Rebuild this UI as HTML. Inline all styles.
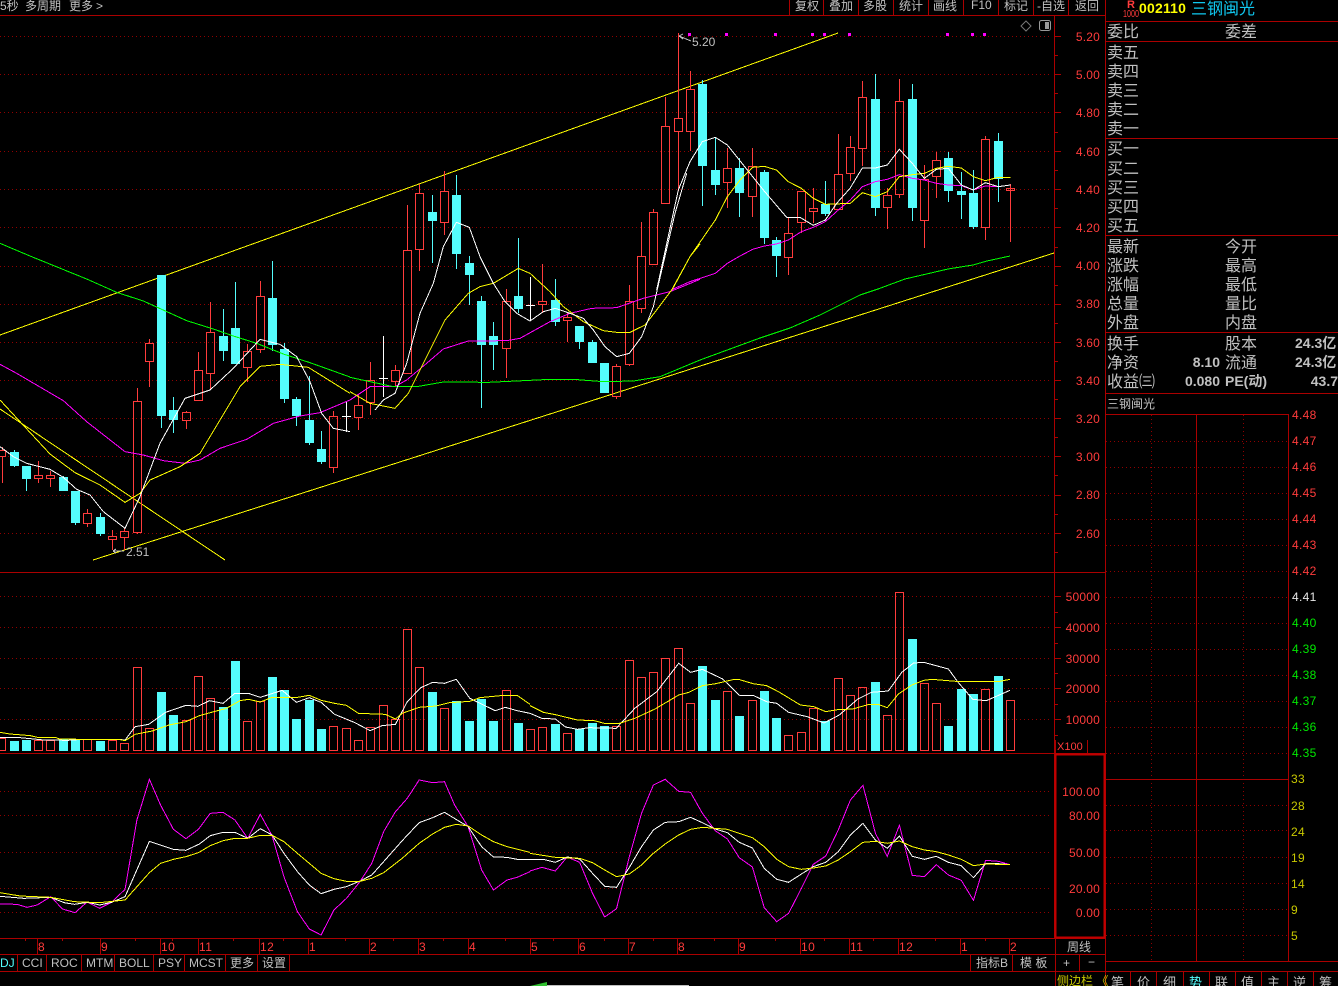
<!DOCTYPE html>
<html><head><meta charset="utf-8"><title>三钢闽光 002110</title>
<style>
html,body{margin:0;padding:0;background:#000;width:1338px;height:986px;overflow:hidden}
svg{display:block}
text{font-family:"Liberation Sans","WenQuanYi Zen Hei","Noto Sans CJK SC",sans-serif}
.g{fill:#c0c0c0}
.r{fill:#ff3c3c}
.y{fill:#c8c800}
.gn{fill:#00e600}
.c{font-size:16px;fill:#c0c0c0}
.a{font-size:12px;fill:#ff3c3c;text-anchor:end;letter-spacing:.2px}
.t{font-size:12px;fill:#ff3c3c;letter-spacing:.5px}
.b{font-size:12px;fill:#c0c0c0}
.v{font-size:14px;font-weight:bold;fill:#c0c0c0}
.l{fill:none;stroke-width:1;shape-rendering:crispEdges;vector-effect:non-scaling-stroke}
.d{fill:none;stroke:#900000;stroke-dasharray:1 3;shape-rendering:crispEdges}
.s{fill:none;stroke:#aa0000;shape-rendering:crispEdges}
</style></head><body>
<svg width="1338" height="986" viewBox="0 0 1338 986" xmlns="http://www.w3.org/2000/svg">

<!-- dotted grids -->
<path class="d" d="M0 36.5H1052M0 74.5H1052M0 112.5H1052M0 151.5H1052M0 189.5H1052M0 227.5H1052M0 266.5H1052M0 304.5H1052M0 342.5H1052M0 380.5H1052M0 418.5H1052M0 456.5H1052M0 495.5H1052M0 533.5H1052"/>
<path class="d" d="M0 596.5H1052M0 627.5H1052M0 658.5H1052M0 688.5H1052M0 719.5H1052"/>
<path class="d" d="M0 791.5H1052M0 815.5H1052M0 852.5H1052M0 888.5H1052M0 912.5H1052"/>
<path class="d" d="M1106 441.5H1288M1106 467.5H1288M1106 493.5H1288M1106 519.5H1288M1106 545.5H1288M1106 571.5H1288M1106 597.5H1288M1106 623.5H1288M1106 649.5H1288M1106 675.5H1288M1106 701.5H1288M1106 727.5H1288M1106 753.5H1288M1106 805.5H1288M1106 830.5H1288M1106 857.5H1288M1106 883.5H1288M1106 909.5H1288M1106 935.5H1288M1151.5 415V961M1243.5 415V961"/>

<!-- trend lines -->
<path class="l" stroke="#ffff00" d="M0 335L838 33M93 560L1054 253M0 409L225 560"/>

<!-- candle wicks: red -->
<path class="l" stroke="#ff3c3c" d="M2.5 447V450M2.5 456V483M38.5 461V475M38.5 478V483M50.5 471V475M50.5 478V487M87.5 509V513M87.5 523V527M112.5 530V536M112.5 539V550M124.5 528V531M124.5 537V550M137.5 388V401M137.5 532V534M149.5 339V343M149.5 361V387M186.5 411V412M186.5 420V429M198.5 352V370M210.5 302V332M210.5 373V389M247.5 344V351M247.5 367V382M260.5 281V296M260.5 349V353M333.5 411V416M333.5 467V473M358.5 394V405M358.5 417V430M370.5 362V380M370.5 402V415M395.5 365V370M395.5 381V387M407.5 205V250M419.5 184V193M419.5 249V271M444.5 171V191M444.5 222V235M506.5 289V301M506.5 348V378M542.5 264V301M542.5 304V313M567.5 313V317M567.5 320V342M616.5 364V366M616.5 396V399M629.5 285V301M629.5 364V366M641.5 222V256M641.5 308V313M653.5 209V212M665.5 97V126M678.5 33V118M678.5 131V191M690.5 71V89M690.5 131V151M727.5 148V168M727.5 182V208M752.5 148V166M752.5 196V217M788.5 217V233M788.5 257V275M801.5 222V233M813.5 188V208M813.5 211V223M838.5 134V174M850.5 136V147M850.5 173V181M862.5 81V97M862.5 148V166M887.5 188V195M887.5 207V229M899.5 79V101M899.5 194V198M924.5 165V179M924.5 220V248M936.5 152V160M936.5 176V198M985.5 136V139M985.5 227V240M1010.5 184V188M1010.5 189V242"/>
<!-- candle bodies: red -->
<path class="l" stroke="#ff3c3c" d="M-1.5 450.5h7v6h-7zM34.5 475.5h8v3h-8zM46.5 475.5h8v3h-8zM83.5 513.5h8v10h-8zM108.5 536.5h8v3h-8zM120.5 531.5h8v6h-8zM133.5 401.5h8v131h-8zM145.5 343.5h8v18h-8zM182.5 412.5h8v8h-8zM194.5 370.5h8v30h-8zM206.5 332.5h8v41h-8zM243.5 351.5h8v16h-8zM256.5 296.5h8v53h-8zM329.5 416.5h8v51h-8zM354.5 405.5h8v12h-8zM366.5 380.5h8v22h-8zM391.5 370.5h8v11h-8zM403.5 250.5h8v123h-8zM415.5 193.5h8v56h-8zM440.5 191.5h8v31h-8zM502.5 301.5h8v47h-8zM538.5 301.5h8v3h-8zM563.5 317.5h8v3h-8zM612.5 366.5h8v30h-8zM625.5 301.5h8v63h-8zM637.5 256.5h8v52h-8zM649.5 212.5h8v52h-8zM661.5 126.5h8v77h-8zM674.5 118.5h8v13h-8zM686.5 89.5h8v42h-8zM723.5 168.5h8v14h-8zM748.5 166.5h8v30h-8zM784.5 233.5h8v24h-8zM797.5 191.5h8v31h-8zM809.5 208.5h8v3h-8zM834.5 174.5h8v35h-8zM846.5 147.5h8v26h-8zM858.5 97.5h8v51h-8zM883.5 195.5h8v12h-8zM895.5 101.5h8v93h-8zM920.5 179.5h8v41h-8zM932.5 160.5h8v16h-8zM981.5 139.5h8v88h-8zM1006.5 188.5h8v2h-8z"/>
<!-- candle wicks: cyan -->
<path class="l" stroke="#54fcfc" d="M14.5 450V467M26.5 479V491M63.5 476V478M75.5 523V525M100.5 513V517M100.5 534V536M161.5 416V428M173.5 397V410M173.5 420V433M223.5 309V336M223.5 351V361M235.5 282V328M272.5 261V298M272.5 345V351M284.5 343V349M284.5 399V403M296.5 397V399M296.5 416V426M309.5 376V420M309.5 443V445M321.5 431V449M321.5 462V464M432.5 195V212M432.5 221V263M456.5 175V195M456.5 254V269M469.5 256V263M469.5 275V305M481.5 296V301M481.5 345V408M493.5 322V336M493.5 345V370M518.5 238V296M518.5 309V313M555.5 279V300M555.5 322V326M579.5 342V349M592.5 340V342M702.5 80V84M702.5 166V206M715.5 137V170M715.5 185V195M739.5 158V168M739.5 193V217M764.5 170V172M764.5 238V244M776.5 237V240M776.5 256V277M825.5 181V204M825.5 214V216M875.5 74V99M875.5 208V216M912.5 84V99M912.5 208V221M948.5 152V158M948.5 191V202M961.5 172V191M961.5 195V219M973.5 170V193M973.5 227V229M998.5 133V141M998.5 179V202"/>
<!-- candle bodies: cyan -->
<path fill="#54fcfc" shape-rendering="crispEdges" d="M10 452h9v14h-9zM22 466h9v13h-9zM59 477h9v14h-9zM71 491h9v32h-9zM96 517h9v17h-9zM157 275h9v141h-9zM169 410h9v10h-9zM219 336h9v15h-9zM231 328h9v36h-9zM268 298h9v47h-9zM280 349h9v50h-9zM292 399h9v17h-9zM305 420h9v23h-9zM317 449h9v13h-9zM428 212h9v9h-9zM452 195h9v59h-9zM465 263h9v12h-9zM477 301h9v44h-9zM489 336h9v9h-9zM514 296h9v13h-9zM551 300h9v22h-9zM575 326h9v16h-9zM588 342h9v21h-9zM600 363h9v30h-9zM698 84h9v82h-9zM711 170h9v15h-9zM735 168h9v25h-9zM760 172h9v66h-9zM772 240h9v16h-9zM821 204h9v10h-9zM871 99h9v109h-9zM908 99h9v109h-9zM944 158h9v33h-9zM957 191h9v4h-9zM969 193h9v34h-9zM994 141h9v38h-9z"/>
<!-- white crosses -->
<path class="l" stroke="#ffffff" d="M346.5 402V432M342 416.5H351M383.5 336V397M379 378.5H388M530.5 277V321M526 305.5H535"/>

<!-- moving averages, section 1 -->
<g transform="translate(0,230) scale(.33333)">
<polyline class="l" stroke="#ff00ff" points="0,403 50,430 190,512 260,575 375,665 430,675 490,692 555,700 600,690 660,655 740,628 820,580 900,558 960,548 1050,510"/>
<polyline class="l" stroke="#00ff00" points="0,40 90,78 260,147 350,187 430,213 560,272 640,297 700,318 770,340 850,372 930,398 1050,441"/>
<polyline class="l" stroke="#ffff00" points="0,510 60,575 150,672 225,728 300,765 375,817 420,790 450,750 540,710 600,670 720,470 780,409 840,403 925,412 1050,490"/>
<polyline class="l" stroke="#ffffff" points="0,650 40,680 80,700 150,718 190,742 230,778 270,795 310,845 375,895 420,800 480,640 555,505 630,480 700,415 780,328 840,343 890,380 930,455 965,550 1000,595 1050,605"/>
</g>
<!-- section 2 -->
<g transform="translate(350,170) scale(.33333)">
<polyline class="l" stroke="#ff00ff" points="0,690 60,650 135,650 170,630 230,580 280,537 355,513 470,512 510,505 600,455 660,430 725,415 800,413 880,385 960,365 1050,328"/>
<polyline class="l" stroke="#00ff00" points="0,622 60,635 130,650 200,650 280,636 415,637 520,632 600,628 670,628 760,635 850,633 930,620 1050,570"/>
<polyline class="l" stroke="#ffff00" points="0,665 60,700 135,715 175,670 230,560 285,450 355,370 390,350 430,340 505,295 540,310 600,365 640,410 700,455 760,482 800,487 840,487 885,465 920,420 965,360 1020,260 1050,222"/>
<polyline class="l" stroke="#ffffff" points="75,720 100,690 135,670 170,580 210,430 250,340 280,230 319,157 358,172 390,260 430,340 465,395 500,430 540,453 580,425 616,415 660,430 700,445 730,480 765,530 800,560 838,550 875,500 910,410 940,280 975,130 1010,10"/>
</g>
<!-- section 3 -->
<g transform="translate(640,20) scale(.33333)">
<polyline class="l" stroke="#ff00ff" points="97,808 150,785 226,760 262,730 300,708 338,688 373,678 409,672 445,660 484,635 520,622 556,605 595,570 631,540 667,500 706,485 742,478 778,464 817,475 853,480 889,490 925,495 964,497 1000,510 1036,498 1075,500 1111,495"/>
<polyline class="l" stroke="#ffff00" points="97,808 150,710 226,600 262,530 300,480 338,442 373,439 409,450 445,485 484,505 520,535 556,553 631,550 667,518 706,530 742,515 778,470 817,464 853,460 889,445 925,439 964,444 1000,470 1036,482 1075,472 1111,472"/>
<polyline class="l" stroke="#ffffff" points="50,810 115,510 150,425 187,365 226,352 262,375 298,420 370,510 440,592 480,592 520,616 556,600 590,550 630,505 667,444 706,444 742,435 778,388 817,430 853,475 889,448 925,445 964,495 1000,510 1036,488 1075,500 1111,495"/>
</g>
<polyline class="l" stroke="#00ff00" points="700,360 760,338 790,328 820,315 860,295 878,289 905,279 948,269 973,265 987,261 1010,256"/>

<!-- magenta markers -->
<path fill="#ff00ff" shape-rendering="crispEdges" d="M688 33h3v3h-3zM725 33h3v3h-3zM774 33h3v3h-3zM811 33h3v3h-3zM823 33h3v3h-3zM848 33h3v3h-3zM946 33h3v3h-3zM971 33h3v3h-3zM983 33h3v3h-3z"/>

<!-- hi/lo markers -->
<path class="l" stroke="#c0c0c0" d="M679 36L691 41M679 36L683 34M679 36L683 39M113 551H124M113 551L116 549M113 551L116 553"/>
<text x="692" y="46" class="b">5.20</text>
<text x="126" y="556" class="b">2.51</text>

<!-- diamond and square icons -->
<path fill="none" stroke="#777" d="M1026 21L1031 26L1026 31L1021 26Z"/>
<rect x="1039.5" y="20.5" width="11" height="10" rx="2" fill="none" stroke="#999"/>
<rect x="1045" y="22" width="4" height="7" fill="#999"/>

<!-- volume bars -->
<path class="l" stroke="#ff3c3c" d="M-1.5 738.5h7v12h-7zM34.5 740.5h8v10h-8zM46.5 740.5h8v10h-8zM83.5 739.5h8v11h-8zM108.5 740.5h8v10h-8zM120.5 743.5h8v7h-8zM133.5 667.5h8v83h-8zM145.5 728.5h8v22h-8zM182.5 720.5h8v30h-8zM194.5 676.5h8v74h-8zM206.5 698.5h8v52h-8zM243.5 721.5h8v29h-8zM256.5 701.5h8v49h-8zM329.5 726.5h8v24h-8zM342.5 728.5h8v22h-8zM354.5 740.5h8v10h-8zM366.5 727.5h8v23h-8zM379.5 705.5h8v45h-8zM391.5 719.5h8v31h-8zM403.5 629.5h8v121h-8zM415.5 667.5h8v83h-8zM440.5 708.5h8v42h-8zM502.5 690.5h8v60h-8zM526.5 729.5h8v21h-8zM538.5 727.5h8v23h-8zM563.5 733.5h8v17h-8zM612.5 726.5h8v24h-8zM625.5 660.5h8v90h-8zM637.5 677.5h8v73h-8zM649.5 672.5h8v78h-8zM661.5 658.5h8v92h-8zM674.5 648.5h8v102h-8zM686.5 703.5h8v47h-8zM723.5 691.5h8v59h-8zM748.5 700.5h8v50h-8zM784.5 735.5h8v15h-8zM797.5 732.5h8v18h-8zM809.5 708.5h8v42h-8zM834.5 678.5h8v72h-8zM846.5 695.5h8v55h-8zM858.5 687.5h8v63h-8zM883.5 715.5h8v35h-8zM895.5 592.5h8v158h-8zM920.5 683.5h8v67h-8zM932.5 703.5h8v47h-8zM981.5 689.5h8v61h-8zM1006.5 700.5h8v50h-8z"/>
<path fill="#54fcfc" shape-rendering="crispEdges" d="M10 741h9v10h-9zM22 740h9v11h-9zM59 739h9v12h-9zM71 739h9v12h-9zM96 741h9v10h-9zM157 692h9v59h-9zM169 715h9v36h-9zM219 707h9v44h-9zM231 661h9v90h-9zM268 677h9v74h-9zM280 690h9v61h-9zM292 719h9v32h-9zM305 700h9v51h-9zM317 729h9v22h-9zM428 692h9v59h-9zM452 701h9v50h-9zM465 721h9v30h-9zM477 699h9v52h-9zM489 721h9v30h-9zM514 723h9v28h-9zM551 724h9v27h-9zM575 729h9v22h-9zM588 723h9v28h-9zM600 726h9v25h-9zM698 666h9v85h-9zM711 700h9v51h-9zM735 716h9v35h-9zM760 691h9v60h-9zM772 718h9v33h-9zM821 721h9v30h-9zM871 682h9v69h-9zM908 639h9v112h-9zM944 726h9v25h-9zM957 689h9v62h-9zM969 694h9v57h-9zM994 676h9v75h-9z"/>
<!-- volume MAs -->
<g transform="translate(0,585) scale(.338,.33333)">
<polyline class="l" stroke="#ffffff" points="0,457 60,458 130,465 200,466 245,463 350,463 370,465 400,425 440,418 490,382 550,361 585,364 620,347 660,355 695,325 735,325 770,337 835,316 877,352 915,338 950,352 990,388 1050,413 1095,437 1130,422 1170,418 1205,350 1245,308 1280,292 1315,295 1350,283 1390,340 1465,377 1495,367 1530,377 1568,385"/>
<polyline class="l" stroke="#ffff00" points="0,442 30,447 90,452 110,457 165,457 175,462 240,463 350,463 370,467 400,448 450,438 500,420 550,410 590,392 640,378 670,370 710,347 735,343 770,351 805,337 880,337 915,331 950,346 990,355 1025,361 1060,385 1140,388 1170,402 1190,385 1240,367 1290,363 1330,353 1390,349 1420,338 1480,332 1530,331 1568,358"/>
</g>
<g transform="translate(530,585) scale(.338,.33333)">
<polyline class="l" stroke="#ffffff" points="0,385 35,400 75,402 105,426 140,433 175,428 255,430 290,392 310,370 375,320 440,235 475,262 510,253 570,282 620,331 660,331 700,350 730,355 765,382 820,395 870,414 915,390 970,342 1010,322 1060,318 1100,262 1135,234 1165,232 1238,252 1265,290 1310,343 1350,347 1420,316"/>
<polyline class="l" stroke="#ffff00" points="0,362 40,382 80,390 140,405 190,407 220,415 265,415 310,400 370,372 440,330 470,322 510,302 550,296 600,284 620,284 660,296 700,302 735,320 800,360 840,365 875,380 910,374 955,372 1000,359 1030,358 1057,368 1090,327 1130,300 1165,286 1190,283 1260,289 1390,289 1420,283"/>
</g>

<!-- indicator lines -->
<g transform="translate(0,770) scale(.338,.33333)">
<polyline class="l" stroke="#ff00ff" points="0,402 50,403 80,412 110,405 150,380 185,417 222,428 258,396 295,415 330,397 370,358 405,150 442,28 475,105 513,178 550,206 587,178 622,130 660,127 695,150 733,205 770,133 805,197 840,320 855,360 880,425 915,477 950,495 988,420 1025,385 1065,335 1100,280 1135,185 1170,125 1205,85 1240,30 1280,38 1315,35 1345,105 1385,170 1425,300 1460,360 1500,330 1530,322 1568,305"/>
<polyline class="l" stroke="#ffffff" points="0,379 70,385 150,382 190,398 220,403 260,397 295,405 330,397 370,380 442,214 513,238 550,241 590,222 622,197 660,187 695,187 733,205 770,176 805,195 840,250 880,305 915,345 950,371 988,358 1025,350 1065,333 1100,315 1135,275 1190,212 1240,158 1280,143 1315,127 1385,170 1425,230 1460,261 1500,262 1530,268 1568,268"/>
<polyline class="l" stroke="#ffff00" points="0,368 60,378 150,382 220,395 295,398 370,390 405,350 442,308 475,280 513,268 550,260 587,248 622,227 660,212 695,205 733,205 770,196 805,196 840,215 880,250 915,280 950,310 988,326 1025,334 1065,334 1100,325 1135,308 1190,265 1240,220 1280,192 1315,172 1350,163 1385,168 1425,195 1460,215 1500,230 1568,247"/>
</g>
<g transform="translate(530,770) scale(.338,.33333)">
<polyline class="l" stroke="#ff00ff" points="0,303 35,292 75,303 110,261 147,277 185,370 221,441 256,416 294,260 330,130 365,45 400,28 440,64 475,67 510,130 548,182 584,207 619,263 658,291 693,413 730,455 765,430 803,355 838,283 875,258 912,180 948,90 985,46 1022,190 1057,259 1093,166 1131,316 1167,320 1202,284 1238,315 1276,331 1312,391 1348,271 1386,274 1420,284"/>
<polyline class="l" stroke="#ffffff" points="0,268 40,268 75,277 110,261 147,267 185,310 221,349 256,352 294,292 330,230 365,180 400,157 440,155 475,142 510,158 548,177 584,188 619,217 658,234 693,295 730,328 765,337 803,312 838,290 875,277 912,245 948,195 985,160 1022,210 1057,235 1093,198 1131,259 1167,268 1202,259 1238,277 1276,287 1312,323 1348,281 1386,281 1420,284"/>
<polyline class="l" stroke="#ffff00" points="0,250 75,262 147,265 185,278 221,300 256,320 294,312 330,285 365,250 400,222 440,195 475,178 510,172 548,175 584,178 619,190 658,203 693,230 730,268 765,290 803,298 838,294 875,288 912,270 948,245 985,217 1022,214 1057,220 1093,213 1131,230 1167,240 1202,245 1238,255 1276,268 1312,287 1348,282 1420,284"/>
</g>

<!-- structural lines -->
<path class="s" d="M0 15.5H1105M1105.5 0V986M1054.5 15V938M0 572.5H1105M0 753.5H1105M0 938.5H1105M0 954.5H1105M0 971.5H1338"/>
<path class="s" d="M789.5 0V15M823.5 0V15M858.5 0V15M893.5 0V15M928.5 0V15M963.5 0V15M998.5 0V15M1033.5 0V15M1068.5 0V15"/>
<path class="s" d="M1105 21.5H1338M1105 41.5H1338M1105 138.5H1338M1105 235.5H1338M1105 332.5H1338M1105 393.5H1338M1105 414.5H1288.5V961M1196.5 415V961M1105 779.5H1288M1105 961.5H1338"/>
<path class="s" d="M1055 36.5h6M1055 55.5h3M1055 74.5h6M1055 93.5h3M1055 112.5h6M1055 132.5h3M1055 151.5h6M1055 170.5h3M1055 189.5h6M1055 208.5h3M1055 227.5h6M1055 247.5h3M1055 266.5h6M1055 285.5h3M1055 304.5h6M1055 323.5h3M1055 342.5h6M1055 361.5h3M1055 380.5h6M1055 399.5h3M1055 418.5h6M1055 437.5h3M1055 456.5h6M1055 475.5h3M1055 495.5h6M1055 514.5h3M1055 533.5h6M1055 552.5h3"/>
<path class="s" d="M1055 596.5h6M1055 612.5h3M1055 627.5h6M1055 643.5h3M1055 658.5h6M1055 673.5h3M1055 688.5h6M1055 704.5h3M1055 719.5h6M1055 735.5h3"/>
<path class="s" d="M1055.5 740V753M1087.5 740V753"/>
<rect x="1055.5" y="754.5" width="49" height="183" fill="none" stroke="#c00000" stroke-width="2" shape-rendering="crispEdges"/>
<path class="s" d="M37.5 938V954M100.5 938V954M160.5 938V954M198.5 938V954M259.5 938V954M308.5 938V954M369.5 938V954M418.5 938V954M468.5 938V954M530.5 938V954M578.5 938V954M628.5 938V954M677.5 938V954M738.5 938V954M800.5 938V954M849.5 938V954M898.5 938V954M960.5 938V954M1009.5 938V954"/>
<path class="s" d="M25.5 938v3M62.5 938v3M135.5 938v3M172.5 938v3M233.5 938v3M283.5 938v3M345.5 938v3M393.5 938v3M443.5 938v3M505.5 938v3M553.5 938v3M604.5 938v3M653.5 938v3M714.5 938v3M775.5 938v3M824.5 938v3M873.5 938v3M935.5 938v3M985.5 938v3"/>
<path class="s" d="M17.5 954V971M46.5 954V971M81.5 954V971M114.5 954V971M153.5 954V971M184.5 954V971M225.5 954V971M257.5 954V971M289.5 954V971M970.5 954V971M1012.5 954V971M1055.5 938V986M1079.5 954V971"/>
<path class="s" d="M1130.5 972V986M1156.5 972V986M1183.5 972V986M1209.5 972V986M1235.5 972V986M1261.5 972V986M1287.5 972V986M1313.5 972V986"/>

<!-- top bar -->
<text x="0" y="10" class="b">5秒</text>
<text x="25" y="10" class="b">多周期</text>
<text x="69" y="10" class="b">更多</text>
<text x="96" y="10" class="b">&gt;</text>
<text x="795" y="10" class="b">复权</text>
<text x="829" y="10" class="b">叠加</text>
<text x="863" y="10" class="b">多股</text>
<text x="899" y="10" class="b">统计</text>
<text x="933" y="10" class="b">画线</text>
<text x="971" y="9" class="b">F10</text>
<text x="1004" y="10" class="b">标记</text>
<text x="1037" y="10" class="b">-自选</text>
<text x="1075" y="10" class="b">返回</text>

<!-- header -->
<text x="1127" y="8" font-size="11" font-weight="bold" class="r">R</text>
<text x="1123" y="17" font-size="10" class="r" textLength="16" lengthAdjust="spacingAndGlyphs">1000</text>
<text x="1139" y="13" font-size="14" font-weight="bold" fill="#ffff00" letter-spacing=".2">002110</text>
<text x="1191" y="14" font-size="16" fill="#10c8f0">三钢闽光</text>

<!-- order book -->
<text x="1107" y="37" class="c">委比</text><text x="1225" y="37" class="c">委差</text>
<text x="1107" y="58" class="c">卖五</text>
<text x="1107" y="77" class="c">卖四</text>
<text x="1107" y="96" class="c">卖三</text>
<text x="1107" y="115" class="c">卖二</text>
<text x="1107" y="134" class="c">卖一</text>
<text x="1107" y="154" class="c">买一</text>
<text x="1107" y="174" class="c">买二</text>
<text x="1107" y="193" class="c">买三</text>
<text x="1107" y="212" class="c">买四</text>
<text x="1107" y="231" class="c">买五</text>
<text x="1107" y="252" class="c">最新</text><text x="1225" y="252" class="c">今开</text>
<text x="1107" y="271" class="c">涨跌</text><text x="1225" y="271" class="c">最高</text>
<text x="1107" y="290" class="c">涨幅</text><text x="1225" y="290" class="c">最低</text>
<text x="1107" y="309" class="c">总量</text><text x="1225" y="309" class="c">量比</text>
<text x="1107" y="328" class="c">外盘</text><text x="1225" y="328" class="c">内盘</text>
<text x="1107" y="349" class="c">换手</text><text x="1225" y="349" class="c">股本</text>
<text x="1107" y="368" class="c">净资</text><text x="1225" y="368" class="c">流通</text>
<text x="1107" y="387" class="c">收益㈢</text>
<text x="1295" y="348" class="v">24.3亿</text>
<text x="1295" y="367" class="v">24.3亿</text>
<text x="1220" y="367" class="v" text-anchor="end">8.10</text>
<text x="1220" y="386" class="v" text-anchor="end">0.080</text>
<text x="1225" y="386" class="v">PE(动)</text>
<text x="1338" y="386" class="v" text-anchor="end">43.7</text>
<text x="1107" y="408" font-size="12" class="g">三钢闽光</text>

<!-- main axis -->
<text x="1100" y="41" class="a">5.20</text>
<text x="1100" y="79" class="a">5.00</text>
<text x="1100" y="117" class="a">4.80</text>
<text x="1100" y="156" class="a">4.60</text>
<text x="1100" y="194" class="a">4.40</text>
<text x="1100" y="232" class="a">4.20</text>
<text x="1100" y="270" class="a">4.00</text>
<text x="1100" y="308" class="a">3.80</text>
<text x="1100" y="347" class="a">3.60</text>
<text x="1100" y="385" class="a">3.40</text>
<text x="1100" y="423" class="a">3.20</text>
<text x="1100" y="461" class="a">3.00</text>
<text x="1100" y="499" class="a">2.80</text>
<text x="1100" y="538" class="a">2.60</text>
<text x="1100" y="601" class="a">50000</text>
<text x="1100" y="632" class="a">40000</text>
<text x="1100" y="663" class="a">30000</text>
<text x="1100" y="693" class="a">20000</text>
<text x="1100" y="724" class="a">10000</text>
<text x="1057" y="750" font-size="11" class="r">X100</text>
<text x="1100" y="796" class="a">100.00</text>
<text x="1100" y="820" class="a">80.00</text>
<text x="1100" y="857" class="a">50.00</text>
<text x="1100" y="893" class="a">20.00</text>
<text x="1100" y="917" class="a">0.00</text>

<!-- time axis -->
<text x="38" y="951" class="t">8</text>
<text x="101" y="951" class="t">9</text>
<text x="161" y="951" class="t">10</text>
<text x="199" y="951" class="t">11</text>
<text x="260" y="951" class="t">12</text>
<text x="309" y="951" class="t">1</text>
<text x="370" y="951" class="t">2</text>
<text x="419" y="951" class="t">3</text>
<text x="469" y="951" class="t">4</text>
<text x="531" y="951" class="t">5</text>
<text x="579" y="951" class="t">6</text>
<text x="629" y="951" class="t">7</text>
<text x="678" y="951" class="t">8</text>
<text x="739" y="951" class="t">9</text>
<text x="801" y="951" class="t">10</text>
<text x="850" y="951" class="t">11</text>
<text x="899" y="951" class="t">12</text>
<text x="961" y="951" class="t">1</text>
<text x="1010" y="951" class="t">2</text>
<text x="1067" y="951" font-size="12" class="g">周线</text>

<!-- bottom tabs -->
<text x="0" y="967" font-size="12" fill="#54fcfc">DJ</text>
<text x="22" y="967" class="b">CCI</text>
<text x="51" y="967" class="b">ROC</text>
<text x="86" y="967" class="b">MTM</text>
<text x="119" y="967" class="b">BOLL</text>
<text x="158" y="967" class="b">PSY</text>
<text x="189" y="967" class="b">MCST</text>
<text x="230" y="967" class="b">更多</text>
<text x="262" y="967" class="b">设置</text>
<text x="976" y="967" class="b">指标B</text>
<text x="1020" y="967" class="b">模 板</text>
<text x="1063" y="967" class="b">+</text>
<text x="1088" y="966" class="b">−</text>
<text x="1057" y="985" font-size="12" class="y">侧边栏 《</text>

<!-- right tabs -->
<text x="1111" y="987" font-size="13" class="g">笔</text>
<text x="1137" y="987" font-size="13" class="g">价</text>
<text x="1163" y="987" font-size="13" class="g">细</text>
<text x="1189" y="987" font-size="13" fill="#54fcfc">势</text>
<text x="1215" y="987" font-size="13" class="g">联</text>
<text x="1241" y="987" font-size="13" class="g">值</text>
<text x="1267" y="987" font-size="13" class="g">主</text>
<text x="1293" y="987" font-size="13" class="g">逆</text>
<text x="1319" y="987" font-size="13" class="g">筹</text>

<!-- time chart axis -->
<g font-size="12" letter-spacing=".3">
<text x="1292" y="419" class="r">4.48</text>
<text x="1292" y="445" class="r">4.47</text>
<text x="1292" y="471" class="r">4.46</text>
<text x="1292" y="497" class="r">4.45</text>
<text x="1292" y="523" class="r">4.44</text>
<text x="1292" y="549" class="r">4.43</text>
<text x="1292" y="575" class="r">4.42</text>
<text x="1292" y="601" fill="#e8e8e8">4.41</text>
<text x="1292" y="627" class="gn">4.40</text>
<text x="1292" y="653" class="gn">4.39</text>
<text x="1292" y="679" class="gn">4.38</text>
<text x="1292" y="705" class="gn">4.37</text>
<text x="1292" y="731" class="gn">4.36</text>
<text x="1292" y="757" class="gn">4.35</text>
<text x="1291" y="783" class="y">33</text>
<text x="1291" y="810" class="y">28</text>
<text x="1291" y="836" class="y">24</text>
<text x="1291" y="862" class="y">19</text>
<text x="1291" y="888" class="y">14</text>
<text x="1291" y="914" class="y">9</text>
<text x="1291" y="940" class="y">5</text>
</g>

<!-- bottom strip -->
<path fill="#30c030" d="M530 986L547 982V986Z"/>
<rect x="547" y="985" width="142" height="1" fill="#c0c0c0"/>
</svg>
</body></html>
